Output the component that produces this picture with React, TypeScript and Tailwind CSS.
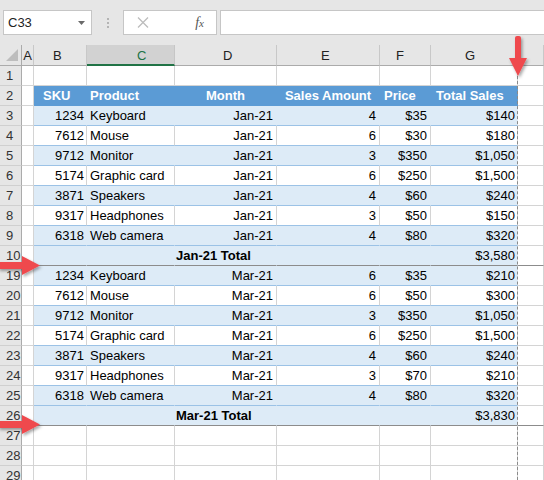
import React from "react";

type Kind = "empty" | "head" | "band" | "plain" | "total";
type RowDef = { n: number; kind: Kind; cells?: string[]; brk?: boolean };

// widths of columns A..H
const colW = ["w-[12px]", "w-[53px]", "w-[88px]", "w-[102px]", "w-[103px]", "w-[51px]", "w-[87px]", "w-[26px]"];

const jan = [
  ["1234", "Keyboard", "Jan-21", "4", "$35", "$140"],
  ["7612", "Mouse", "Jan-21", "6", "$30", "$180"],
  ["9712", "Monitor", "Jan-21", "3", "$350", "$1,050"],
  ["5174", "Graphic card", "Jan-21", "6", "$250", "$1,500"],
  ["3871", "Speakers", "Jan-21", "4", "$60", "$240"],
  ["9317", "Headphones", "Jan-21", "3", "$50", "$150"],
  ["6318", "Web camera", "Jan-21", "4", "$80", "$320"],
];

const mar = [
  ["1234", "Keyboard", "Mar-21", "6", "$35", "$210"],
  ["7612", "Mouse", "Mar-21", "6", "$50", "$300"],
  ["9712", "Monitor", "Mar-21", "3", "$350", "$1,050"],
  ["5174", "Graphic card", "Mar-21", "6", "$250", "$1,500"],
  ["3871", "Speakers", "Mar-21", "4", "$60", "$240"],
  ["9317", "Headphones", "Mar-21", "3", "$70", "$210"],
  ["6318", "Web camera", "Mar-21", "4", "$80", "$320"],
];

const rows: RowDef[] = [
  { n: 1, kind: "empty" },
  { n: 2, kind: "head", cells: ["SKU", "Product", "Month", "Sales Amount", "Price", "Total Sales"] },
  ...jan.map((c, i) => ({ n: 3 + i, kind: (i % 2 === 0 ? "band" : "plain") as Kind, cells: c })),
  { n: 10, kind: "total", cells: ["", "", "Jan-21 Total", "", "", "$3,580"], brk: true },
  ...mar.map((c, i) => ({ n: 19 + i, kind: (i % 2 === 0 ? "band" : "plain") as Kind, cells: c })),
  { n: 26, kind: "total", cells: ["", "", "Mar-21 Total", "", "", "$3,830"], brk: true },
  { n: 27, kind: "empty" },
  { n: 28, kind: "empty" },
  { n: 29, kind: "empty" },
];

const headPad = ["pl-[9px]", "pl-[3px]", "justify-center", "justify-center", "pl-[4px]", "pl-[5px]"];
const dataAlign = ["justify-end pr-[2px]", "pl-[3px]", "justify-end pr-[3px]", "justify-end pr-[3px]", "justify-end pr-[3px]", "justify-end pr-[2px]"];

function gridCls(brk?: boolean) {
  return brk ? "bg-white border-[#d4d4d4] border-b-[#8c8c8c]" : "bg-white border-[#d4d4d4]";
}

function tableCls(kind: Kind, brk?: boolean) {
  if (kind === "head") return "bg-[#5b9bd5] border-[#5b9bd5] text-white font-bold text-[12.5px]";
  if (kind === "plain") return "bg-white border-[#d4d4d4] border-b-[#9bc2e6]";
  if (brk) return "bg-[#ddebf7] border-[#ddebf7] border-b-[#8c8c8c]";
  return "bg-[#ddebf7] border-[#ddebf7] border-b-[#9bc2e6]";
}

function SheetRow({ row }: { row: RowDef }) {
  const cell = "shrink-0 h-[20px] border-r border-b whitespace-nowrap flex text-[13px] leading-[18px] pt-[1px] text-black";
  return (
    <div className="flex h-[20px]">
      <div className="w-[22px] shrink-0 h-[20px] bg-[#e6e6e6] border-r border-b border-r-[#ababab] border-b-[#d0d0d0] text-[#333] pl-[6px] text-[13px] leading-[19px]">
        {row.n}
      </div>
      <div className={`${cell} ${colW[0]} ${gridCls(row.brk)}`} />
      {[0, 1, 2, 3, 4, 5].map((i) => {
        const text = row.cells ? row.cells[i] : "";
        let cls = row.kind === "empty" ? gridCls(row.brk) : tableCls(row.kind, row.brk);
        let align = row.kind === "head" ? headPad[i] : dataAlign[i];
        if (row.kind === "total" && i === 2) {
          align = "pl-[1px]";
          cls += " font-bold text-[12.5px]";
        }
        return (
          <div key={i} className={`${cell} ${colW[i + 1]} ${cls} ${align}`}>
            {text}
          </div>
        );
      })}
      <div className={`${cell} ${colW[7]} ${gridCls(row.brk)}`} />
    </div>
  );
}

const colLabels = [
  { l: "A", cls: "justify-center" },
  { l: "B", cls: "pl-[19px]" },
  { l: "C", cls: "pl-[50px]", sel: true },
  { l: "D", cls: "pl-[48px]" },
  { l: "E", cls: "pl-[44px]" },
  { l: "F", cls: "pl-[16px]" },
  { l: "G", cls: "pl-[34px]" },
  { l: "", cls: "" },
];

export default function App() {
  return (
    <div className="relative w-[544px] h-[480px] overflow-hidden bg-[#e6e6e6] font-['Liberation_Sans',Arial,sans-serif]">
      <div className="h-[10px]" />
      {/* formula bar */}
      <div className="flex h-[25px]">
        <div className="ml-[3px] w-[89px] bg-white border border-[#c6c6c6] flex items-center justify-between pl-[4px] pr-[6px] text-[13px] text-[#222]">
          <span>C33</span>
          <svg width="7" height="4" viewBox="0 0 7 4">
            <polygon points="0,0 7,0 3.5,4" fill="#6a6a6a" />
          </svg>
        </div>
        <div className="w-[31px] flex flex-col items-center justify-center gap-[2px]">
          <div className="w-[2px] h-[2px] bg-[#b4b4b4]" />
          <div className="w-[2px] h-[2px] bg-[#b4b4b4]" />
          <div className="w-[2px] h-[2px] bg-[#b4b4b4]" />
        </div>
        <div className="w-[94px] bg-white border border-[#c6c6c6] flex items-center justify-between pl-[13px] pr-[12px]">
          <svg width="12" height="11" viewBox="0 0 12 11">
            <path d="M1 0.5 L11 10.5 M11 0.5 L1 10.5" stroke="#bdbdbd" strokeWidth="1.3" />
          </svg>
          <span className="font-['Liberation_Serif',serif] italic text-[14px] text-[#555] leading-none">
            f<span className="text-[11px]">x</span>
          </span>
        </div>
        <div className="ml-[3px] flex-1 bg-white border border-[#c6c6c6] border-r-0" />
      </div>
      <div className="h-[10px]" />
      {/* column headers */}
      <div className="flex h-[21px]">
        <div className="w-[22px] shrink-0 h-[21px] bg-[#e6e6e6] border-r border-b border-[#ababab] relative">
          <svg className="absolute right-[3px] bottom-[4px]" width="12" height="12" viewBox="0 0 12 12">
            <polygon points="0,12 12,12 12,0" fill="#bdbdbd" />
          </svg>
        </div>
        {colLabels.map((c, i) =>
          c.sel ? (
            <div
              key={i}
              className={`shrink-0 ${colW[i]} h-[21px] bg-[#d2d2d2] border-r border-[#c6c6c6] border-b-2 border-b-[#217346] flex ${c.cls} text-[13px] leading-[19px] pt-[1px] text-[#217346]`}
            >
              {c.l}
            </div>
          ) : (
            <div
              key={i}
              className={`shrink-0 ${colW[i]} h-[21px] bg-[#e6e6e6] border-r border-b border-r-[#c8c8c8] border-b-[#ababab] flex ${c.cls} text-[13px] leading-[19px] pt-[1px] text-[#222]`}
            >
              {c.l}
            </div>
          )
        )}
      </div>
      {/* sheet */}
      {rows.map((r) => (
        <SheetRow key={r.n} row={r} />
      ))}

      {/* page break dashed line */}
      <div className="absolute left-[517px] top-[66px] bottom-0 border-l border-dashed border-[#8a8a8a]" />

      {/* arrows */}
      <svg className="absolute inset-0 pointer-events-none" width="544" height="480" viewBox="0 0 544 480">
        <defs>
          <filter id="sh" x="-50%" y="-50%" width="200%" height="200%">
            <feDropShadow dx="1.5" dy="2" stdDeviation="1.5" floodColor="#000" floodOpacity="0.35" />
          </filter>
        </defs>
        <g fill="#ef4a4e" filter="url(#sh)">
          <rect x="515" y="36" width="6" height="24" rx="2" />
          <polygon points="509,58 527,58 518,76" />
          <rect x="-2" y="262" width="26" height="7" rx="1" />
          <polygon points="22,256 40,265.5 22,275" />
          <rect x="-2" y="421" width="26" height="7" rx="1" />
          <polygon points="22,415 40,424.5 22,434" />
        </g>
      </svg>
    </div>
  );
}
